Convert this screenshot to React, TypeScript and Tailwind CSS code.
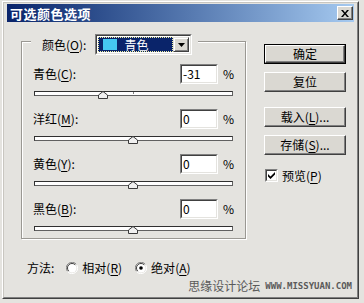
import type { ReactNode } from "react";

type Channel = {
  label: string;
  hotkey: string;
  value: number;
};

const channels: Channel[] = [
  { label: "青色", hotkey: "C", value: -31 },
  { label: "洋红", hotkey: "M", value: 0 },
  { label: "黄色", hotkey: "Y", value: 0 },
  { label: "黑色", hotkey: "B", value: 0 },
];

const TRACK_WIDTH = 198;

function Hot({ text, k, after = "" }: { text: string; k: string; after?: string }) {
  return (
    <span className="whitespace-nowrap">
      {text}(<span className="underline underline-offset-2">{k}</span>){after}
    </span>
  );
}

function Button({ children, primary = false }: { children: ReactNode; primary?: boolean }) {
  return (
    <div className={primary ? "border border-black" : ""}>
      <div
        className={
          "flex items-center justify-center border border-t-white border-l-white border-r-[#404040] border-b-[#404040] bg-[#dad8d2] shadow-[inset_-1px_-1px_0_#808080] text-[12px] leading-none text-black " +
          (primary ? "h-[18px]" : "h-[20px]")
        }
      >
        {children}
      </div>
    </div>
  );
}

function Slider({ value }: { value: number }) {
  // thumb center: -100..100 across the track
  const center = ((value + 100) / 200) * (TRACK_WIDTH - 2) + 1;
  return (
    <div className="relative mx-[12px] mt-[7px] h-[8px]">
      <div className="mt-[2px] h-[5px] border border-t-[#303030] border-l-[#303030] border-r-[#606060] border-b-[#606060] bg-white" />
      <div className="absolute top-[1px] left-[99px] h-[2px] w-px bg-[#808080]" />
      <svg
        className="absolute top-0"
        style={{ left: center - 5 }}
        width="10"
        height="8"
        viewBox="0 0 10 8"
      >
        <polygon points="0.5,7.5 0.5,4 5,0.5 9.5,4 9.5,7.5" fill="#f0f0f0" stroke="#3a3a3a" />
      </svg>
    </div>
  );
}

function Row({ channel, first }: { channel: Channel; first: boolean }) {
  return (
    <div className={first ? "mt-[9px]" : "mt-[10px]"}>
      <div className="flex h-[20px] items-center pl-[11px] pr-[12px]">
        <div className="flex-1">
          <Hot text={channel.label} k={channel.hotkey} after=":" />
        </div>
        <div className="flex h-[20px] w-[38px] items-center border border-t-[#808080] border-l-[#808080] border-r-white border-b-white">
          <div className="flex h-full w-full items-center border border-t-[#404040] border-l-[#404040] border-r-[#e4e3df] border-b-[#e4e3df] bg-white pl-[1px]">
            {channel.value}
          </div>
        </div>
        <span className="ml-[5px] w-[10px]">%</span>
      </div>
      <Slider value={channel.value} />
    </div>
  );
}

function Radio({ checked }: { checked: boolean }) {
  return (
    <svg width="12" height="12" viewBox="0 0 12 12">
      <path d="M10.5 2.5 A5.5 5.5 0 0 0 1.5 9.5" fill="none" stroke="#808080" />
      <path d="M1.5 9.5 A5.5 5.5 0 0 0 10.5 2.5" fill="none" stroke="#ffffff" />
      <circle cx="6" cy="6" r="4.5" fill="#ffffff" />
      <path d="M9.2 2.8 A4.5 4.5 0 0 0 2.8 9.2" fill="none" stroke="#404040" />
      {checked && <circle cx="6" cy="6" r="1.8" fill="#000" />}
    </svg>
  );
}

export default function App() {
  return (
    <div className="h-[303px] w-[364px] overflow-hidden bg-[#e4e3df] pt-[1px] pb-[4px] pl-[2px] pr-[5px] font-['Noto_Sans_CJK_SC',sans-serif] text-[12px] leading-none text-black">
      <div className="h-full border border-t-white border-l-white border-r-[#404040] border-b-[#404040]">
        <div className="flex h-full flex-col border border-t-[#c8c6c0] border-l-[#c8c6c0] border-r-[#808080] border-b-[#808080] px-[3px] pt-[1px]">
          {/* title bar */}
          <div className="flex h-[18px] shrink-0 items-center justify-between bg-gradient-to-r from-[#0a246a] to-[#a6caf0] pl-[3px] pr-[1px]">
            <span className="text-[13px] font-bold tracking-[0.5px] text-white">可选颜色选项</span>
            <div className="flex h-[14px] w-[16px] items-center justify-center border border-t-white border-l-white border-r-[#404040] border-b-[#404040] bg-[#dad8d2] shadow-[inset_-1px_-1px_0_#808080]">
              <svg width="8" height="7" viewBox="0 0 8 7">
                <path d="M0 0 L2 0 L4 2.5 L6 0 L8 0 L5 3.5 L8 7 L6 7 L4 4.5 L2 7 L0 7 L3 3.5 Z" fill="#000" />
              </svg>
            </div>
          </div>

          <div className="flex">
            {/* options group */}
            <div className="ml-[14px] mt-[19px] w-[225px] border border-[#9a9893] pb-[4px] shadow-[inset_1px_1px_0_#fff,1px_1px_0_#fff]">
              <div className="-mt-[8px] ml-[9px] flex h-[21px] w-fit items-center gap-[9px] bg-[#e4e3df] pl-[11px] pr-[6px]">
                <Hot text="颜色" k="O" after=":" />
                <div className="flex h-[21px] w-[97px] border border-t-[#808080] border-l-[#808080] border-r-white border-b-white">
                  <div className="flex flex-1 border border-t-[#404040] border-l-[#404040] border-r-[#e4e3df] border-b-[#e4e3df] bg-white p-[1px]">
                    <div className="flex flex-1 items-center border border-dotted border-[#f0f0a0] bg-[#0a246a] pl-[4px] text-white">
                      <span className="h-[11px] w-[14px] bg-[#45c8f2]" />
                      <span className="ml-[7px]">青色</span>
                    </div>
                    <div className="flex w-[16px] items-center justify-center border border-t-[#e4e3df] border-l-[#e4e3df] border-r-[#404040] border-b-[#404040] bg-[#dad8d2] shadow-[inset_1px_1px_0_#fff,inset_-1px_-1px_0_#808080]">
                      <svg width="7" height="4" viewBox="0 0 7 4">
                        <path d="M0 0 L7 0 L3.5 4 Z" fill="#000" />
                      </svg>
                    </div>
                  </div>
                </div>
              </div>
              {channels.map((c, i) => (
                <Row key={c.hotkey} channel={c} first={i === 0} />
              ))}
            </div>

            {/* buttons */}
            <div className="ml-[18px] mt-[22px] flex w-[82px] flex-col">
              <Button primary>确定</Button>
              <div className="mt-[8px]">
                <Button>复位</Button>
              </div>
              <div className="mt-[15px]">
                <Button>
                  <Hot text="载入" k="L" after="..." />
                </Button>
              </div>
              <div className="mt-[8px]">
                <Button>
                  <Hot text="存储" k="S" after="..." />
                </Button>
              </div>
              <div className="mt-[14px] flex items-center gap-[4px] pl-[1px]">
                <div className="flex h-[13px] w-[13px] items-center justify-center border border-t-[#808080] border-l-[#808080] border-r-white border-b-white">
                  <div className="flex h-full w-full items-center justify-center border border-t-[#404040] border-l-[#404040] border-r-[#e4e3df] border-b-[#e4e3df] bg-white">
                    <svg width="7" height="7" viewBox="0 0 7 7">
                      <path d="M0 2 L0 4.5 L2.5 7 L7 2.5 L7 0 L2.5 4.5 Z" fill="#000" />
                    </svg>
                  </div>
                </div>
                <Hot text="预览" k="P" />
              </div>
            </div>
          </div>

          {/* method */}
          <div className="mt-[21px] flex h-[16px] items-center pl-[20px]">
            <span>方法:</span>
            <div className="ml-[12px] flex items-center gap-[4px]">
              <Radio checked={false} />
              <Hot text="相对" k="R" />
            </div>
            <div className="ml-[13px] flex items-center gap-[4px]">
              <Radio checked />
              <Hot text="绝对" k="A" />
            </div>
          </div>

          <div className="mt-[4px] flex items-center justify-end pr-[2px] text-[#5a5a5a]">
            <span className="text-[12px]">思缘设计论坛</span>
            <span className="ml-[5px] font-['DejaVu_Sans_Mono',monospace] text-[9px] font-bold">WWW.MISSYUAN.COM</span>
          </div>
        </div>
      </div>
    </div>
  );
}
